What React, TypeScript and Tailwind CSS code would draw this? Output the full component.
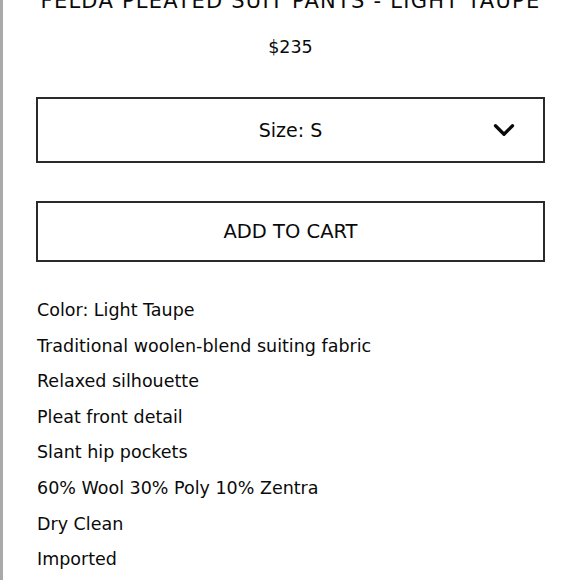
import { ChevronDown } from 'lucide-react';

const DETAILS = [
  'Color: Light Taupe',
  'Traditional woolen-blend suiting fabric',
  'Relaxed silhouette',
  'Pleat front detail',
  'Slant hip pockets',
  '60% Wool 30% Poly 10% Zentra',
  'Dry Clean',
  'Imported',
];

export default function App() {
  return (
    <div className="h-[580px] w-[580px] overflow-hidden bg-white border-l-[3px] border-[#a9a9a9] text-[#0a0a0a] font-['DejaVu_Sans',sans-serif]">
      <div className="pl-[33px] pr-[35px]">
        {/* Title, clipped at the top */}
        <h1 className="-mt-[14px] h-[30px] text-center text-[21px] leading-[30px] tracking-[1.25px] uppercase whitespace-nowrap">
          Felda Pleated Suit Pants - Light Taupe
        </h1>

        <p className="mt-[20px] text-center text-[17.5px] leading-[22px]">$235</p>

        {/* Size select */}
        <div className="mt-[39px] h-[66px] border-2 border-[#2a2a2a] relative flex items-center justify-center">
          <span className="text-[19px]">Size: S</span>
          <ChevronDown className="absolute right-[22px] w-[34px] h-[34px]" strokeWidth={2.3} />
        </div>

        {/* Add to cart */}
        <button className="mt-[38px] w-full h-[61px] border-2 border-[#2a2a2a] flex items-center justify-center text-[19.5px] uppercase">
          Add to cart
        </button>

        {/* Details */}
        <ul className="mt-[31px] flex flex-col pl-[1px]">
          {DETAILS.map((d) => (
            <li key={d} className="h-[35.6px] text-[17.5px] leading-[35.6px] whitespace-nowrap">
              {d}
            </li>
          ))}
        </ul>
      </div>
    </div>
  );
}
